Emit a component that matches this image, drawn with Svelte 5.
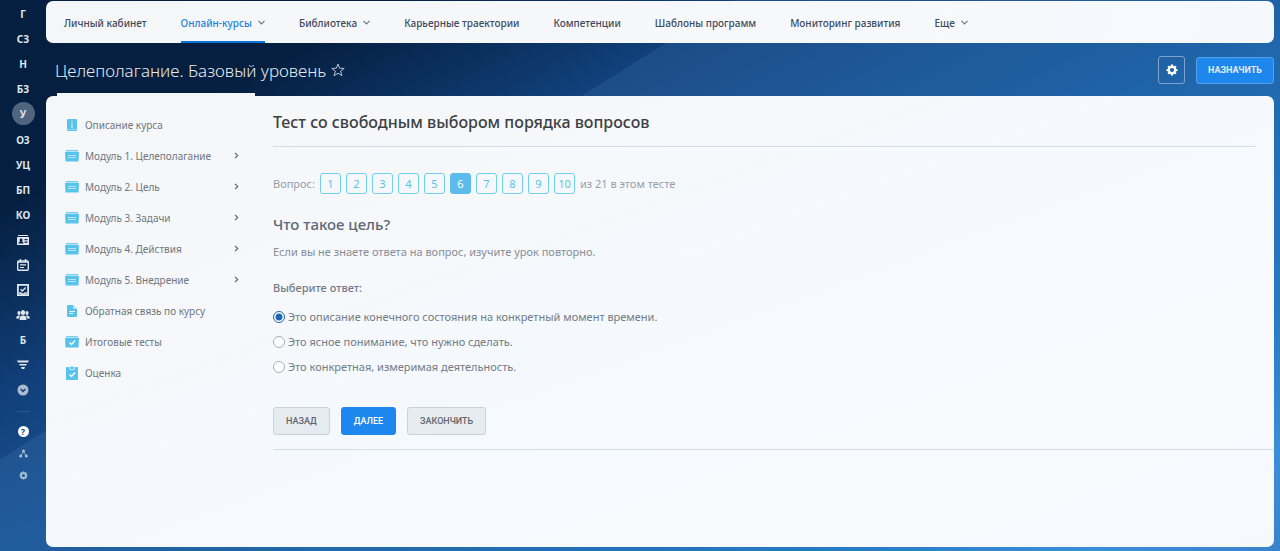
<script>
  const rail = [
    { text: 'Г' },
    { text: 'СЗ' },
    { text: 'Н' },
    { text: 'БЗ' },
    { text: 'У', active: true },
    { text: 'ОЗ' },
    { text: 'УЦ' },
    { text: 'БП' },
    { text: 'КО' },
    { icon: 'card', label: 'Контакты' },
    { icon: 'calendar', label: 'Календарь' },
    { icon: 'task', label: 'Задачи' },
    { icon: 'people', label: 'Сотрудники' },
    { text: 'Б' },
    { icon: 'funnel', label: 'CRM' },
    { icon: 'more', label: 'Показать все' },
  ];

  const nav = [
    { title: 'Личный кабинет' },
    { title: 'Онлайн-курсы', arrow: true, active: true },
    { title: 'Библиотека', arrow: true },
    { title: 'Карьерные траектории' },
    { title: 'Компетенции' },
    { title: 'Шаблоны программ' },
    { title: 'Мониторинг развития' },
    { title: 'Еще', arrow: true },
  ];

  const sections = [
    { title: 'Описание курса', icon: 'info' },
    { title: 'Модуль 1. Целеполагание', icon: 'module', nested: true },
    { title: 'Модуль 2. Цель', icon: 'module', nested: true },
    { title: 'Модуль 3. Задачи', icon: 'module', nested: true },
    { title: 'Модуль 4. Действия', icon: 'module', nested: true },
    { title: 'Модуль 5. Внедрение', icon: 'module', nested: true },
    { title: 'Обратная связь по курсу', icon: 'doc' },
    { title: 'Итоговые тесты', icon: 'test' },
    { title: 'Оценка', icon: 'clipboard' },
  ];

  const answers = [
    'Это описание конечного состояния на конкретный момент времени.',
    'Это ясное понимание, что нужно сделать.',
    'Это конкретная, измеримая деятельность.',
  ];

  const questions = [1, 2, 3, 4, 5, 6, 7, 8, 9, 10];

  let current = $state(6);
  let answer = $state(0);
</script>

{#snippet gear(size)}
  <svg width={size} height={size} viewBox="0 0 16 16" fill="none" stroke="currentColor">
    <circle cx="8" cy="8" r="4.2" stroke-width="2.8" />
    <path
      stroke-width="3"
      d="M8 .8v2.4M8 12.8v2.4M.8 8h2.4M12.8 8h2.4M2.9 2.9l1.7 1.7M11.4 11.4l1.7 1.7M2.9 13.1l1.7-1.7M11.4 4.6l1.7-1.7"
    />
  </svg>
{/snippet}

<div class="app">
  <nav class="rail" aria-label="Разделы">
    {#each rail as item}
      <a href="#section" class:active={item.active} aria-label={item.label}>
        {#if item.text}
          {item.text}
        {:else if item.icon === 'card'}
          <svg width="12" height="12" viewBox="0 0 12 12" fill="currentColor">
            <path d="M1 1h10v1H1z" />
            <path fill-rule="evenodd" d="M0 3h12v8H0zM1.5 9.5h5c0-1.2-.7-1.6-1.5-1.9.5-.5.6-1 .6-1.5 0-.9-.6-1.6-1.5-1.6S2.6 5.2 2.6 6.1c0 .5.1 1 .6 1.5-.9.3-1.7.7-1.7 1.9zM7.5 5v1.2h3V5zM7.5 7.5v1.2h3V7.5z" />
          </svg>
        {:else if item.icon === 'calendar'}
          <svg width="12" height="12" viewBox="0 0 12 12" fill="none" stroke="currentColor">
            <rect x=".7" y="2" width="10.6" height="9.3" rx="1" stroke-width="1.4" />
            <path stroke-width="1.4" d="M3.5 0v3M8.5 0v3" />
            <path stroke-width="1.2" d="M1 3.2h10M3 5.8h6M3 8.5h4" />
          </svg>
        {:else if item.icon === 'task'}
          <svg width="12" height="12" viewBox="0 0 12 12" fill="none" stroke="currentColor">
            <rect x=".9" y=".9" width="10.2" height="10.2" stroke-width="1.8" />
            <path stroke-width="1.4" d="M3.6 5.3l1.8 1.7 3.2-3.4M2 9h2l.8 1h2.4L8 9h2" />
          </svg>
        {:else if item.icon === 'people'}
          <svg width="14" height="12" viewBox="0 0 14 12" fill="currentColor">
            <ellipse cx="7" cy="3.5" rx="2.2" ry="2.6" />
            <ellipse cx="3" cy="4" rx="1.6" ry="2" />
            <ellipse cx="11" cy="4" rx="1.6" ry="2" />
            <path d="M3.6 11V8.6c0-1.2 1.5-1.4 2.4-2.1h2c.9.7 2.4.9 2.4 2.1V11z" />
            <path d="M0 9.6C0 7.2 1.5 7 2.4 6.4h1.2L4.2 7 3 8v1.6zM14 9.6c0-2.4-1.5-2.6-2.4-3.2h-1.2L9.8 7 11 8v1.6z" />
          </svg>
        {:else if item.icon === 'funnel'}
          <svg width="12" height="12" viewBox="0 0 12 12" fill="currentColor">
            <path d="M0 1.5h12l-1 2H1zM2 5h8L9 6.6H3zM4 8h4l-.8 2H4.8z" />
          </svg>
        {:else}
          <svg class="dim" width="12" height="12" viewBox="0 0 12 12">
            <circle cx="6" cy="6" r="5.5" fill="currentColor" />
            <path d="M3.6 5L6 7.4 8.4 5" fill="none" stroke="#174783" stroke-width="1.5" />
          </svg>
        {/if}
      </a>
    {/each}

    <hr />

    <div class="tools">
      <button type="button" aria-label="Помощь">
        <span class="help">?</span>
      </button>
      <button type="button" class="dim" aria-label="Карта сайта">
        <svg width="9" height="9" viewBox="0 0 9 9">
          <path d="M2 6.5l2.5-4 2.5 4" fill="none" stroke="currentColor" stroke-width=".8" />
          <g fill="currentColor">
            <circle cx="4.5" cy="2" r="1.5" />
            <circle cx="1.7" cy="7" r="1.5" />
            <circle cx="7.3" cy="7" r="1.5" />
          </g>
        </svg>
      </button>
      <button type="button" class="dim" aria-label="Настройки меню">{@render gear(9)}</button>
    </div>
  </nav>

  <div class="page">
    <nav class="topbar" aria-label="Главное меню">
      {#each nav as item}
        <a href="#page" class:active={item.active}>
          {item.title}
          {#if item.arrow}
            <svg width="7" height="5" viewBox="0 0 7 5" fill="none" stroke="#6b7785" stroke-width="1.2">
              <path d="M.5.8l3 3 3-3" />
            </svg>
          {/if}
        </a>
      {/each}
    </nav>

    <header>
      <h1>Целеполагание. Базовый уровень</h1>
      <button type="button" class="star" aria-label="В избранное">
        <svg width="14" height="14" viewBox="0 0 14 14" fill="none" stroke="currentColor">
          <path d="M7 1l1.6 4.2 4.6.2-3.6 2.8 1.3 4.5L7 10.2l-3.9 2.5 1.3-4.5L.8 5.4l4.6-.2z" />
        </svg>
      </button>
      <button type="button" class="settings" aria-label="Настройки">{@render gear(12)}</button>
      <button type="button" class="assign">Назначить</button>
    </header>

    <div class="panel">
      <aside>
        <ul>
          {#each sections as section}
            <li>
              <a href="#course">
                <svg width="14" height="14" viewBox="0 0 14 14" fill="#57c3eb">
                  {#if section.icon === 'info'}
                    <rect x="2" y="1" width="10" height="12" rx="1" />
                    <path d="M7 3v1.5M7 5.5V10" stroke="#b9e7f8" stroke-width="1.5" />
                    <path d="M2 11.5h10" stroke="#8fd8f2" />
                  {:else if section.icon === 'doc'}
                    <path d="M2 2q0-1 1-1h5l4 4v7q0 1-1 1H3q-1 0-1-1z" />
                    <path d="M8 1v4h4z" fill="#b5e5f7" />
                    <path d="M4 7.5h6M4 9.5h4" stroke="#dff4fb" />
                  {:else if section.icon === 'clipboard'}
                    <rect x="1" y="1" width="12" height="13" rx="1" />
                    <rect x="4" y="0" width="6" height="4" rx="2" fill="#c8edf9" />
                    <rect x="5" y="1" width="4" height="2" rx="1" />
                    <path d="M4.5 8.5l2 2 3.5-4" fill="none" stroke="#fff" stroke-width="1.3" />
                  {:else}
                    <path d="M1 1h12v1.5H1z" opacity=".8" />
                    <path d="M0 3h14l-.5 9.5H.5z" />
                    {#if section.icon === 'test'}
                      <path d="M4.5 7.5l2 2 3.5-4" fill="none" stroke="#fff" stroke-width="1.3" />
                    {:else}
                      <path d="M3 6.5h8M3 8.5h8" stroke="#b5e5f7" />
                    {/if}
                  {/if}
                </svg>
                <span>{section.title}</span>
                {#if section.nested}
                  <svg width="5" height="7" viewBox="0 0 5 7" fill="none" stroke="#5b6672" stroke-width="1.2">
                    <path d="M1 .8l2.7 2.7L1 6.2" />
                  </svg>
                {/if}
              </a>
            </li>
          {/each}
        </ul>
      </aside>

      <main>
        <h2>Тест со свободным выбором порядка вопросов</h2>

        <div class="pager">
          <span>Вопрос:</span>
          {#each questions as n}
            <button type="button" class:current={n === current} onclick={() => (current = n)}>{n}</button>
          {/each}
          <span>из 21 в этом тесте</span>
        </div>

        <h3>Что такое цель?</h3>
        <p>Если вы не знаете ответа на вопрос, изучите урок повторно.</p>

        <form onsubmit={(e) => e.preventDefault()}>
          <fieldset>
            <legend>Выберите ответ:</legend>
            {#each answers as text, i}
              <label>
                <input type="radio" name="answer" value={i} bind:group={answer} />
                {text}
              </label>
            {/each}
          </fieldset>

          <div class="actions">
            <button type="button">Назад</button>
            <button type="submit" class="next">Далее</button>
            <button type="button" class="finish">Закончить</button>
          </div>
        </form>
      </main>
    </div>
  </div>
</div>

<style>
  :global(body) {
    background: #1c62a5;
  }

  .app {
    display: flex;
    min-height: 100vh;
    box-sizing: border-box;
    padding: 1px 6px 4px 0;
    font-family: 'Noto Sans', 'Open Sans', sans-serif;
    font-size: 11px;
    background:
      linear-gradient(148deg, transparent 34%, rgba(110, 170, 230, 0.12) 34%, transparent 58%),
      linear-gradient(152deg, #051f40 0%, #051f40 17%, #113f79 32%, #1a5596 45%, #2066aa 58%, #257ac4 80%, #3a8fd8 92%, #3a82cb 100%);
  }

  a {
    color: inherit;
    text-decoration: none;
  }

  button {
    display: flex;
    align-items: center;
    justify-content: center;
    padding: 0;
    border: 0;
    background: none;
    color: inherit;
    font: inherit;
    cursor: pointer;
  }

  svg {
    flex: none;
  }

  /* Left rail */
  .rail {
    flex: 0 0 46px;
    display: flex;
    flex-direction: column;
    align-items: center;
    color: #dfe6ee;
    font-size: 10px;
    font-weight: 700;
  }

  .rail a {
    display: flex;
    align-items: center;
    justify-content: center;
    width: 23px;
    height: 23px;
    margin: 1px 0;
    border-radius: 50%;
  }

  .rail a.active {
    margin-bottom: 2px;
    background: #51647f;
  }

  .rail hr {
    width: 13px;
    height: 1px;
    margin: 9px 0 8px;
    border: 0;
    background: rgba(255, 255, 255, 0.12);
  }

  .tools button {
    width: 22px;
    height: 22px;
  }

  .dim {
    opacity: 0.75;
  }

  .help {
    width: 11px;
    height: 11px;
    border-radius: 50%;
    background: #fff;
    color: #174783;
    font-size: 9px;
    line-height: 11px;
  }

  /* Top navigation */
  .page {
    flex: 1;
    min-width: 0;
    display: flex;
    flex-direction: column;
  }

  .topbar {
    display: flex;
    gap: 34px;
    height: 42px;
    padding: 0 18px;
    border-radius: 7px;
    background: linear-gradient(100deg, #f4f6f8, #f7f8fb 60%, #f5f9fd);
    color: #3d4a5c;
    font-size: 10px;
    font-weight: 500;
    white-space: nowrap;
  }

  .topbar a {
    display: flex;
    align-items: center;
    gap: 6px;
    border-top: 3px solid transparent;
    border-bottom: 2px solid transparent;
  }

  .topbar a.active {
    border-bottom-color: #0b74d4;
    color: #1f7fdc;
  }

  header {
    display: flex;
    align-items: center;
    box-sizing: border-box;
    height: 53px;
    padding: 1px 0 0 9px;
    color: #e4eaf1;
  }

  h1 {
    margin: 0;
    font-size: 17px;
    font-weight: 300;
  }

  .star {
    margin: 0 auto 0 5px;
    opacity: 0.8;
  }

  .settings {
    width: 27px;
    height: 28px;
    margin-right: 11px;
    border: 1px solid #7fa3cb;
    border-radius: 3px;
    color: #fff;
  }

  .assign {
    padding: 0 11px;
    height: 27px;
    border: 1px solid #559fe8;
    border-radius: 3px;
    background: #1d87ee;
    font-family: Roboto, sans-serif;
    font-size: 9px;
    font-weight: 700;
    text-transform: uppercase;
  }

  /* Course panel */
  .panel {
    position: relative;
    flex: 1;
    display: flex;
    border-radius: 7px;
    background: linear-gradient(160deg, #f5f6f8, #f6f8fb 30%, #f5f9fd 50%, #f8f9fd 80%, #f5f9fe);
  }

  .panel::before {
    content: '';
    position: absolute;
    top: -3px;
    left: 11px;
    width: 198px;
    height: 3px;
    background: #f5f6f8;
  }

  aside {
    flex: 0 0 227px;
    box-sizing: border-box;
    padding: 13px 34px 0 19px;
    color: #6f777f;
    font-size: 10px;
  }

  ul {
    margin: 0;
    padding: 0;
    list-style: none;
  }

  li a {
    display: flex;
    align-items: center;
    gap: 6px;
    height: 31px;
  }

  li span {
    flex: 1;
  }

  main {
    flex: 1;
    min-width: 0;
    color: #727b87;
  }

  h2 {
    margin: 0 18px 0 0;
    padding: 14px 0 12px;
    border-bottom: 1px solid #d3dde4;
    color: #3c4043;
    font-size: 16px;
    font-weight: 500;
    line-height: 24px;
  }

  .pager {
    display: flex;
    align-items: center;
    gap: 5px;
    margin-top: 26px;
    color: #969eaa;
  }

  .pager button {
    width: 21px;
    height: 21px;
    border: 1px solid #6fd0f2;
    border-radius: 3px;
    color: #58c4ea;
  }

  .pager button.current {
    border-color: #5bbbea;
    background: #5bbbea;
    color: #fff;
  }

  h3 {
    margin: 19px 0 0;
    color: #5d6775;
    font-size: 15px;
    font-weight: 500;
    line-height: 22px;
  }

  p {
    margin: 9px 0 0;
    color: #868e99;
    line-height: 16px;
  }

  fieldset {
    margin: 20px 0 0;
    padding: 0;
    border: 0;
  }

  legend {
    margin-bottom: 8px;
    padding: 0;
    font-weight: 500;
    line-height: 16px;
  }

  label {
    display: flex;
    align-items: center;
    gap: 3px;
    height: 25px;
  }

  input {
    appearance: none;
    width: 12px;
    height: 12px;
    margin: 0;
    border: 1px solid #a9adb3;
    border-radius: 50%;
    background: #fff;
  }

  input:checked {
    border-color: #1f66b5;
    background: radial-gradient(#1f66b5 0 3px, #fff 4px);
  }

  .actions {
    display: flex;
    gap: 11px;
    padding: 28px 0 14px;
    border-bottom: 1px solid #d3dde4;
  }

  .actions button {
    height: 28px;
    padding: 0 12px;
    border: 1px solid #c9d2da;
    border-radius: 3px;
    background: #e6ebf2;
    color: #5f666d;
    font-family: Roboto, sans-serif;
    font-size: 9px;
    font-weight: 500;
    text-transform: uppercase;
  }

  .actions .next {
    border-color: #1d87ee;
    background: #1d87ee;
    color: #fff;
  }

  .actions .finish {
    background: #e5edf0;
  }
</style>
